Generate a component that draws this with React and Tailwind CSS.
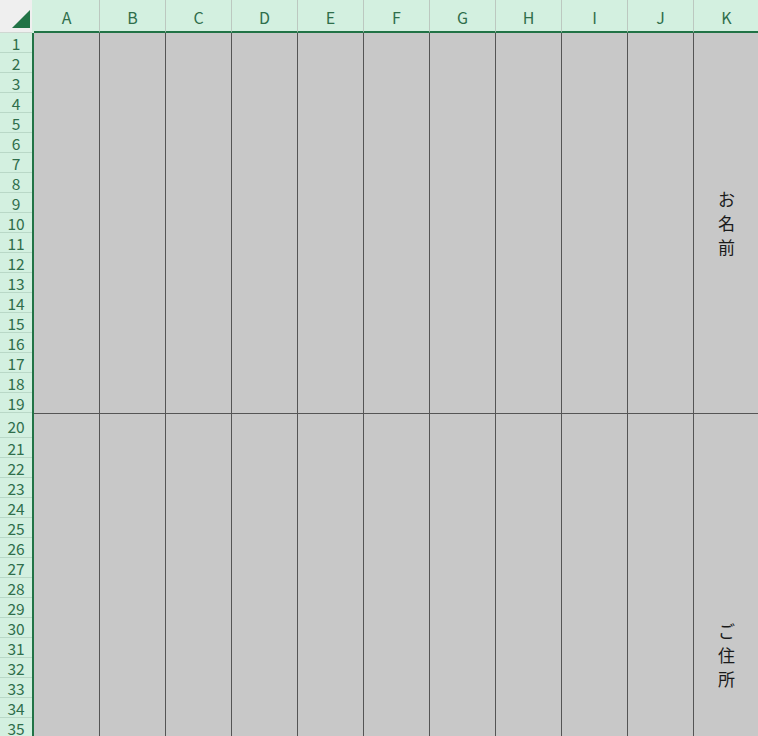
import React from "react";

const cols = ["A", "B", "C", "D", "E", "F", "G", "H", "I", "J", "K"];
const topRows = Array.from({ length: 19 }, (_, i) => i + 1);
const bottomRows = Array.from({ length: 15 }, (_, i) => i + 21);

function VText({ text }) {
  return (
    <div className="flex flex-col items-center text-[17px] leading-[24px] text-[#1a1a1a]">
      {text.split("").map((ch, i) => (
        <span key={i}>{ch}</span>
      ))}
    </div>
  );
}

export default function App() {
  return (
    <div
      className="w-[758px] h-[736px] overflow-hidden bg-[#c8c8c8]"
      style={{ fontFamily: '"Noto Sans CJK JP", "Noto Sans", sans-serif' }}
    >
      {/* Column header row */}
      <div className="flex h-[33px]">
        <div className="w-[34px] shrink-0 flex">
          <div className="w-[32px] h-[33px] bg-[#efefef] border-b border-[#cfd8d2] relative">
            <svg
              className="absolute left-[12px] top-[10px]"
              width="18"
              height="18"
              viewBox="0 0 18 18"
            >
              <polygon points="18,0 18,18 0,18" fill="#217346" />
            </svg>
          </div>
          <div className="w-[2px] h-[33px] bg-[#d3f0e0]" />
        </div>
        {cols.map((c) => (
          <div
            key={c}
            className="w-[66px] shrink-0 h-[33px] bg-[#d3f0e0] border-b-2 border-b-[#217346] border-r border-r-[#bcc8c0] flex items-center justify-center text-[16px] text-[#2f6e4b] pt-[3px]"
          >
            {c}
          </div>
        ))}
      </div>

      <div className="flex">
        {/* Row headers */}
        <div className="w-[34px] shrink-0 bg-[#d3f0e0] border-r-2 border-r-[#217346] text-[15.5px] text-[#2f6e4b]">
          {topRows.map((r) => (
            <div
              key={r}
              className="h-[20px] border-b border-b-[#b9d8c7] flex items-center justify-center leading-[18px] pt-[1px]"
            >
              {r}
            </div>
          ))}
          <div className="h-[25px] border-b border-b-[#b9d8c7] flex items-end justify-center leading-[18px] pb-[2px]">
            20
          </div>
          {bottomRows.map((r) => (
            <div
              key={r}
              className="h-[20px] border-b border-b-[#b9d8c7] flex items-center justify-center leading-[18px] pt-[1px]"
            >
              {r}
            </div>
          ))}
        </div>

        {/* Grid body */}
        <div className="flex">
          {cols.map((c) => (
            <div
              key={c}
              className="w-[66px] shrink-0 border-r border-r-[#555555] flex flex-col"
            >
              <div className="h-[381px] border-b border-b-[#555555] flex items-center justify-center">
                {c === "K" && <VText text="お名前" />}
              </div>
              <div className="h-[330px] flex flex-col items-center pt-[205px]">
                {c === "K" && <VText text="ご住所" />}
              </div>
            </div>
          ))}
        </div>
      </div>
    </div>
  );
}
